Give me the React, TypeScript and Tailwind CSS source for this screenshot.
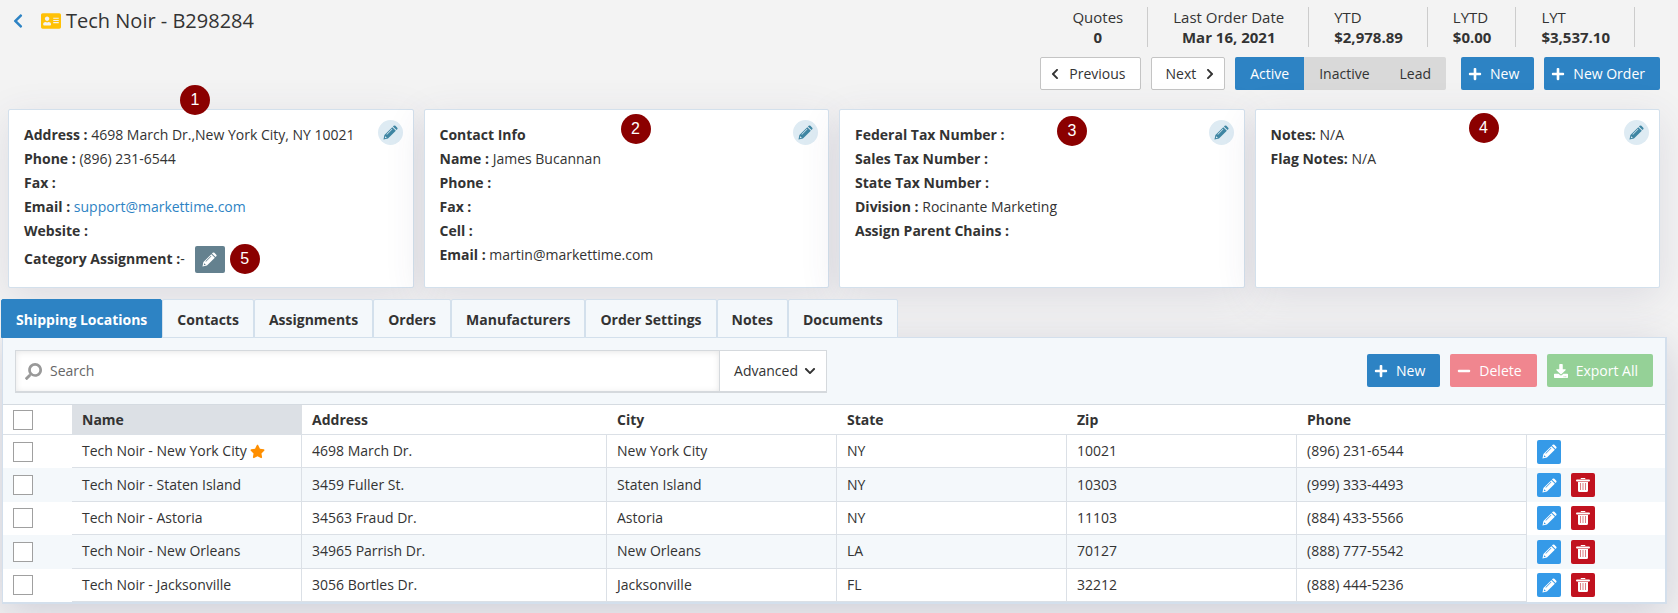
import React from 'react';
import {
  FaAddressCard,
  FaChevronDown,
  FaChevronLeft,
  FaChevronRight,
  FaDownload,
  FaMinus,
  FaPlus,
  FaSearch,
  FaStar,
} from 'react-icons/fa';

interface Stat {
  label: string;
  value: string;
  centered?: boolean;
}

interface Location {
  name: string;
  address: string;
  city: string;
  state: string;
  zip: string;
  phone: string;
  primary?: boolean;
}

const STATS: Stat[] = [
  { label: 'Quotes', value: '0', centered: true },
  { label: 'Last Order Date', value: 'Mar 16, 2021', centered: true },
  { label: 'YTD', value: '$2,978.89' },
  { label: 'LYTD', value: '$0.00' },
  { label: 'LYT', value: '$3,537.10' },
];

const TABS = [
  'Shipping Locations',
  'Contacts',
  'Assignments',
  'Orders',
  'Manufacturers',
  'Order Settings',
  'Notes',
  'Documents',
];

const LOCATIONS: Location[] = [
  { name: 'Tech Noir - New York City', address: '4698 March Dr.', city: 'New York City', state: 'NY', zip: '10021', phone: '(896) 231-6544', primary: true },
  { name: 'Tech Noir - Staten Island', address: '3459 Fuller St.', city: 'Staten Island', state: 'NY', zip: '10303', phone: '(999) 333-4493' },
  { name: 'Tech Noir - Astoria', address: '34563 Fraud Dr.', city: 'Astoria', state: 'NY', zip: '11103', phone: '(884) 433-5566' },
  { name: 'Tech Noir - New Orleans', address: '34965 Parrish Dr.', city: 'New Orleans', state: 'LA', zip: '70127', phone: '(888) 777-5542' },
  { name: 'Tech Noir - Jacksonville', address: '3056 Bortles Dr.', city: 'Jacksonville', state: 'FL', zip: '32212', phone: '(888) 444-5236' },
];

const PencilIcon = ({ className }: { className?: string }) => (
  <svg viewBox="0 0 16 16" fill="currentColor" className={className} aria-hidden="true">
    <path
      fillRule="evenodd"
      d="M9.9 2.3 13.7 6.1 5.3 14.5 .5 15.5 1.5 10.7ZM2.4 11.9 1.9 14.1 4.1 13.6ZM9.5 4.1 3.7 9.900 4.2 10.4 10 4.6Z"
    />
    <path d="M10.6 1.600 11.4 .8Q12.300 0 13.200 .8L15.200 2.800Q16 3.700 15.200 4.600L14.400 5.400Z" />
  </svg>
);

const TrashIcon = ({ className }: { className?: string }) => (
  <svg viewBox="0 0 14 14" fill="none" stroke="currentColor" className={className} aria-hidden="true">
    <path d="M1 2.5h12" strokeWidth="2" strokeLinecap="round" />
    <path d="M5 1V.5h4V1" strokeWidth="1" />
    <path d="M2 4h10v8.5a1.5 1.5 0 0 1-1.5 1.5h-7A1.5 1.5 0 0 1 2 12.5z" fill="currentColor" stroke="none" />
    <path d="M4.5 5v7M7 5v7M9.5 5v7" stroke="#dd7f84" strokeWidth="1" />
  </svg>
);

const Marker = ({ n, className = '' }: { n: number; className?: string }) => (
  <span
    className={`flex h-[30px] w-[30px] items-center justify-center rounded-full bg-[#8b0000] font-['Liberation_Sans',sans-serif] text-base text-white ${className}`}
  >
    {n}
  </span>
);

const Field = ({ label, children }: { label: string; children?: React.ReactNode }) => (
  <p>
    <strong className="font-bold">{label}</strong> {children}
  </p>
);

const InfoCard = ({ title, children }: { title: string; children: React.ReactNode }) => (
  <section
    aria-label={title}
    className="relative rounded-xs border border-[#d3e0ec] bg-white px-[15px] pt-[13px] pb-3 leading-6 shadow-[0_10px_40px_0_rgba(62,57,107,0.12)]"
  >
    {children}
    <button
      type="button"
      aria-label={`Edit ${title}`}
      className="absolute top-[10px] right-[10px] flex h-[25px] w-[25px] items-center justify-center rounded-full bg-[#deebf3] text-[#3f86a3]"
    >
      <PencilIcon className="h-[15px] w-[15px]" />
    </button>
  </section>
);

const CheckBox = ({ label }: { label: string }) => (
  <input
    type="checkbox"
    aria-label={label}
    className="block h-5 w-5 appearance-none border border-[#a0a0a0] bg-white"
  />
);

const Header = () => (
  <header className="flex items-start justify-between">
    <div className="flex h-[42px] items-center pl-[2px]">
      <a href="#back" aria-label="Back" className="text-[#2d83c4]">
        <FaChevronLeft className="h-4 w-4" />
      </a>
      <h1 className="ml-[15px] flex items-center gap-[5px] text-xl text-[#333]">
        <FaAddressCard className="h-5 w-5 text-[#ffc107]" />
        Tech Noir - B298284
      </h1>
    </div>

    <div className="flex flex-col items-end gap-[10px] pt-[7px]">
      <dl className="mr-[25px] flex text-[15px] leading-5">
        {STATS.map((s) => (
          <div
            key={s.label}
            className={`border-r border-[#ccc] pr-6 pl-[25px] ${s.centered ? 'text-center' : ''}`}
          >
            <dt>{s.label}</dt>
            <dd className="font-bold">{s.value}</dd>
          </div>
        ))}
      </dl>

      <div className="flex h-[33px] gap-[10px]">
        <button type="button" className="flex items-center gap-2 rounded-xs border border-[#c4c4c4] bg-white pr-[14px] pl-2">
          <FaChevronLeft className="h-3 w-3" />
          Previous
        </button>
        <button type="button" className="flex items-center gap-2 rounded-xs border border-[#c4c4c4] bg-white pr-2 pl-[14px]">
          Next
          <FaChevronRight className="h-3 w-3" />
        </button>
        <div className="mr-[5px] flex overflow-hidden rounded-xs bg-[#d9d9d9]">
          <button type="button" aria-pressed="true" className="bg-[#2d83c4] px-[15px] text-white">Active</button>
          <button type="button" className="px-[15px]">Inactive</button>
          <button type="button" className="px-[15px]">Lead</button>
        </div>
        <button type="button" className="flex items-center gap-2 rounded-xs bg-[#2d83c4] pr-[15px] pl-[7px] text-white">
          <FaPlus className="h-[14px] w-[14px]" />
          New
        </button>
        <button type="button" className="flex items-center gap-2 rounded-xs bg-[#2d83c4] pr-[15px] pl-[7px] text-white">
          <FaPlus className="h-[14px] w-[14px]" />
          New Order
        </button>
      </div>
    </div>
  </header>
);

const InfoCards = () => (
  <div className="mt-[19px] grid grid-cols-4 gap-[10px]">
    <InfoCard title="Address">
      <Field label="Address :">4698 March Dr.,New York City, NY 10021</Field>
      <Field label="Phone :">(896) 231-6544</Field>
      <Field label="Fax :" />
      <Field label="Email :">
        <a href="mailto:support@markettime.com" className="text-[#2d83c4]">support@markettime.com</a>
      </Field>
      <Field label="Website :" />
      <div className="flex h-8 items-center">
        <strong className="font-bold">Category Assignment :</strong>-
        <button
          type="button"
          aria-label="Edit category assignment"
          className="ml-[10px] flex h-[27px] w-[30px] items-center justify-center rounded-xs bg-[#64818f] text-white"
        >
          <PencilIcon className="h-[15px] w-[15px]" />
        </button>
        <Marker n={5} className="ml-[5px]" />
      </div>
      <Marker n={1} className="absolute -top-[25px] left-[171px]" />
    </InfoCard>

    <InfoCard title="Contact Info">
      <p><strong className="font-bold">Contact Info</strong></p>
      <Field label="Name :">James Bucannan</Field>
      <Field label="Phone :" />
      <Field label="Fax :" />
      <Field label="Cell :" />
      <Field label="Email :">martin@markettime.com</Field>
      <Marker n={2} className="absolute top-1 left-[196px]" />
    </InfoCard>

    <InfoCard title="Tax Info">
      <Field label="Federal Tax Number :" />
      <Field label="Sales Tax Number :" />
      <Field label="State Tax Number :" />
      <Field label="Division :">Rocinante Marketing</Field>
      <Field label="Assign Parent Chains :" />
      <Marker n={3} className="absolute top-[6px] left-[217px]" />
    </InfoCard>

    <InfoCard title="Notes">
      <Field label="Notes:">N/A</Field>
      <Field label="Flag Notes:">N/A</Field>
      <Marker n={4} className="absolute top-[3px] left-[213px]" />
    </InfoCard>
  </div>
);

const Tabs = () => (
  <div role="tablist" className="relative flex pl-px font-bold">
    {TABS.map((tab, i) => (
      <button
        key={tab}
        type="button"
        role="tab"
        aria-selected={i === 0}
        className={`h-[39px] rounded-t-xs border px-[14px] pt-[2px] ${
          i === 0 ? 'border-[#2d83c4] bg-[#2d83c4] text-white' : 'border-[#d3e0ec] bg-[#f4f8fb]'
        }`}
      >
        {tab}
      </button>
    ))}
  </div>
);

const Toolbar = () => (
  <div className="flex items-start justify-between px-3 pt-3 pb-[11px]">
    <div className="flex h-[43px] w-1/2 max-w-[812px] border border-b-2 border-[#d5d9dd] bg-white">
      <label className="flex flex-1 items-center gap-2 pl-[9px] shadow-[inset_0_1px_6px_0_rgba(0,0,0,0.1)]">
        <FaSearch className="h-[17px] w-[17px] -scale-x-100 text-[#999]" />
        <input
          type="text"
          placeholder="Search"
          aria-label="Search"
          className="flex-1 bg-transparent outline-none placeholder:text-[#666]"
        />
      </label>
      <button type="button" className="flex items-center gap-[6px] border-l border-[#d5d9dd] pr-[10px] pl-[14px]">
        Advanced
        <FaChevronDown className="h-3 w-3" />
      </button>
    </div>

    <div className="mt-1 flex h-[33px] gap-[10px] text-white">
      <button type="button" className="flex items-center gap-2 rounded-xs bg-[#2d83c4] pr-[15px] pl-[7px]">
        <FaPlus className="h-[14px] w-[14px]" />
        New
      </button>
      <button type="button" className="flex items-center gap-2 rounded-xs bg-[#f0868f] pr-[15px] pl-[7px]">
        <FaMinus className="h-[14px] w-[14px]" />
        Delete
      </button>
      <button type="button" className="flex items-center gap-2 rounded-xs bg-[#95d197] pr-[15px] pl-[7px]">
        <FaDownload className="h-[14px] w-[14px]" />
        Export All
      </button>
    </div>
  </div>
);

const cell = 'border-r border-b border-[#dbe0e6] pl-[10px]';

const LocationsTable = () => (
  <table className="h-[198px] w-full table-fixed border-separate border-spacing-0 border-t border-[#d5dbe1] bg-white text-left">
    <thead>
      <tr className="h-[30px] *:border-b *:border-[#dbe0e6]">
        <th className="w-[69px] pl-[10px]"><CheckBox label="Select all" /></th>
        <th className="w-[230px] bg-[#dce0e5] pl-[10px]">Name</th>
        <th className="pl-[10px]">Address</th>
        <th className="w-[230px] pl-[10px]">City</th>
        <th className="w-[230px] pl-[10px]">State</th>
        <th className="w-[230px] pl-[10px]">Zip</th>
        <th className="w-[230px] pl-[10px]">Phone</th>
        <th className="w-[138px]" aria-label="Actions" />
      </tr>
    </thead>
    <tbody>
      {LOCATIONS.map((loc) => (
        <tr key={loc.name} className="even:bg-[#f4f8fb]">
          <td className="pl-[10px]"><CheckBox label={`Select ${loc.name}`} /></td>
          <td className={cell}>
            <span className="flex items-center gap-[3px]">
              {loc.name}
              {loc.primary && <FaStar className="h-[15px] w-[15px] text-[#ff8f00]" />}
            </span>
          </td>
          <td className={cell}>{loc.address}</td>
          <td className={cell}>{loc.city}</td>
          <td className={cell}>{loc.state}</td>
          <td className={cell}>{loc.zip}</td>
          <td className={cell}>{loc.phone}</td>
          <td className="pl-[10px]">
            <div className="flex gap-[10px] text-white">
              <button
                type="button"
                aria-label={`Edit ${loc.name}`}
                className="flex h-6 w-6 items-center justify-center rounded-xs bg-[#359ae8]"
              >
                <PencilIcon className="h-[15px] w-[15px]" />
              </button>
              {!loc.primary && (
                <button
                  type="button"
                  aria-label={`Delete ${loc.name}`}
                  className="flex h-6 w-6 items-center justify-center rounded-xs bg-[#c1121f]"
                >
                  <TrashIcon className="h-[14px] w-[14px]" />
                </button>
              )}
            </div>
          </td>
        </tr>
      ))}
    </tbody>
  </table>
);

const App: React.FC = () => {
  return (
    <div className="min-h-screen overflow-hidden bg-[#f3f3f3] pb-[9px] font-['Open_Sans',sans-serif] text-sm text-[#333]">
      <div className="pr-[18px] pl-2">
        <Header />
        <InfoCards />
      </div>
      <div className="mt-[11px] pr-[11px]">
        <Tabs />
        <main className="-mt-px ml-[2px] border border-r-2 border-b-2 border-[#d3dfec] bg-[#f4f8fb] shadow-[0_10px_40px_0_rgba(62,57,107,0.2)]">
          <Toolbar />
          <LocationsTable />
        </main>
      </div>
    </div>
  );
};

export default App;
